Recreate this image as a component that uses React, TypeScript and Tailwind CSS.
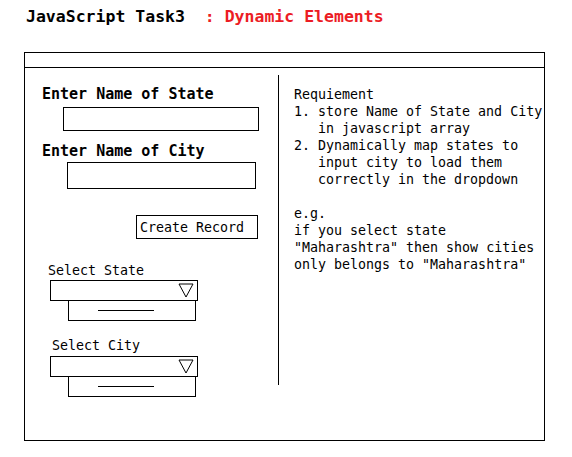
import React from "react";

const mono = { fontFamily: '"DejaVu Sans Mono", "Liberation Mono", monospace' };

function Arrow() {
  return (
    <svg className="absolute right-[3px] top-[2px]" width="16" height="15" viewBox="0 0 16 15">
      <polygon points="1,1 15,1 8,14" fill="none" stroke="#000" strokeWidth="1" />
    </svg>
  );
}

function SelectBox({ label, labelClass }: { label: string; labelClass: string }) {
  return (
    <div className="flex flex-col">
      <div className={labelClass}>{label}</div>
      <div className="relative ml-[25px] h-[21px] w-[148px] border border-black">
        <Arrow />
      </div>
      <div className="ml-[43px] mt-[-1px] flex h-[21px] w-[128px] items-center border border-black pl-[29px]">
        <div className="h-px w-[56px] bg-black" />
      </div>
    </div>
  );
}

export default function App() {
  return (
    <div className="h-[457px] w-[572px] bg-white text-black" style={mono}>
      <div className="whitespace-pre pl-[26px] pt-[7px] text-[16.5px] font-bold leading-[20px]">
        JavaScript Task3<span className="text-[#ec1c24]">  : Dynamic Elements</span>
      </div>

      <div className="ml-[24px] mt-[25px] flex h-[389px] w-[521px] flex-col border border-black">
        <div className="h-[15px] border-b border-black" />
        <div className="flex">
          <div className="flex w-[253px] flex-col text-[13.3px] leading-[17px]">
            <div className="ml-[17px] mt-[18px] text-[15px] font-bold leading-[17px]">Enter Name of State</div>
            <div className="ml-[38px] mt-[4px] h-[24px] w-[196px] border border-black" />
            <div className="ml-[17px] mt-[12px] text-[15px] font-bold leading-[17px]">Enter Name of City</div>
            <div className="ml-[42px] mt-[2px] h-[27px] w-[189px] border border-black" />
            <div className="ml-[111px] mt-[26px] flex h-[24px] w-[122px] items-center border border-black pl-[3px]">
              Create Record
            </div>
            <div className="mt-[23px]">
              <SelectBox label="Select State" labelClass="ml-[23px] mb-[1px]" />
            </div>
            <div className="mt-[16px]">
              <SelectBox label="Select City" labelClass="ml-[27px] mb-[2px]" />
            </div>
          </div>
          <div className="mt-[7px] h-[310px] w-[266px] border-l border-black pl-[15px] pt-[11px] text-[13.3px] leading-[17px]">
            <div>Requiement</div>
            <div className="flex">
              <span className="w-[24px] shrink-0">1.</span>
              <span>store Name of State and City in javascript array</span>
            </div>
            <div className="flex">
              <span className="w-[24px] shrink-0">2.</span>
              <span>Dynamically map states to input city to load them correctly in the dropdown</span>
            </div>
            <div className="mt-[17px]">e.g.</div>
            <div>if you select state</div>
            <div>"Maharashtra" then show cities</div>
            <div>only belongs to "Maharashtra"</div>
          </div>
        </div>
      </div>
    </div>
  );
}
